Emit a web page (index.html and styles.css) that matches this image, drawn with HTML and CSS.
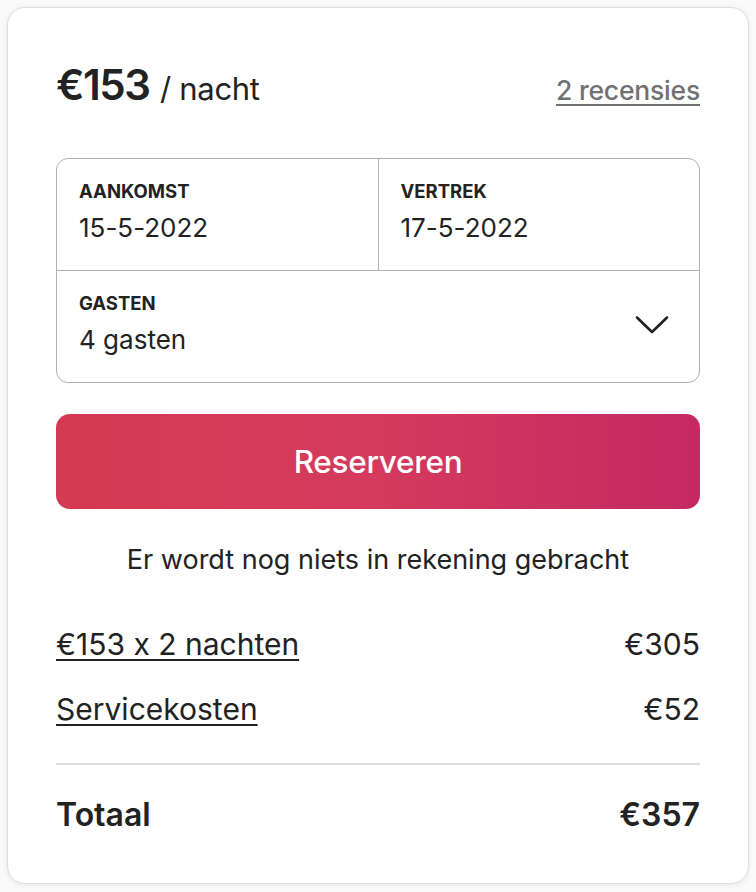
FILE: index.html
```html
<!DOCTYPE html>
<html lang="nl">
<head>
  <meta charset="UTF-8" />
  <meta name="viewport" content="width=device-width, initial-scale=1" />
  <title>Reserveren</title>
  <link rel="stylesheet" href="styles.css">
</head>
<body>

  <div class="booking-card">
    <div class="card-head">
      <div class="price"><strong>€153</strong> <span>/ nacht</span></div>
      <a class="reviews" href="#">2 recensies</a>
    </div>

    <div class="picker">
      <div class="picker-row">
        <div class="field field-left">
          <div class="field-label">AANKOMST</div>
          <div class="field-value">15-5-2022</div>
        </div>
        <div class="field">
          <div class="field-label">VERTREK</div>
          <div class="field-value">17-5-2022</div>
        </div>
      </div>
      <div class="field field-guests">
        <div>
          <div class="field-label">GASTEN</div>
          <div class="field-value">4 gasten</div>
        </div>
        <svg class="chevron" width="34" height="20" viewBox="0 0 34 20" aria-hidden="true">
          <path d="M2 2.5 L17 17 L32 2.5" fill="none" stroke="#222" stroke-width="2.6" stroke-linecap="round" stroke-linejoin="round"/>
        </svg>
      </div>
    </div>

    <button class="reserve-btn">Reserveren</button>

    <p class="notice">Er wordt nog niets in rekening gebracht</p>

    <div class="line">
      <a href="#">€153 x 2 nachten</a>
      <span>€305</span>
    </div>
    <div class="line">
      <a href="#">Servicekosten</a>
      <span>€52</span>
    </div>

    <div class="total">
      <span>Totaal</span>
      <span>€357</span>
    </div>
  </div>

</body>
</html>
```

FILE: styles.css
```css
body {
  margin: 0;
  padding: 7px;
  background: #fafafa;
  font-family: Inter, "Noto Sans", Arial, sans-serif;
  font-feature-settings: "calt" 0;
  color: #222;
}

.booking-card {
  box-sizing: border-box;
  width: 742px;
  height: 877px;
  background: #fff;
  border: 1px solid #dddddd;
  border-radius: 18px;
  box-shadow: 0 1px 6px rgba(0,0,0,0.08);
  padding: 52px 48px 0 48px;
}

.card-head {
  display: flex;
  justify-content: space-between;
  align-items: baseline;
}

.price {
  font-size: 42px;
  line-height: 50px;
  font-weight: 600;
}

.price strong {
  font-weight: 600;
  letter-spacing: -1.5px;
}

.price span {
  font-size: 31px;
  font-weight: 400;
  line-height: 1;
  letter-spacing: -0.3px;
}

.reviews {
  font-size: 26.5px;
  line-height: 1;
  color: #717171;
  font-weight: 500;
  letter-spacing: -0.2px;
  text-decoration: underline;
  text-decoration-thickness: 2px;
  text-underline-offset: 4px;
}

.picker {
  margin-top: 48px;
  border: 1.5px solid #b0b0b0;
  border-radius: 12px;
}

.picker-row {
  display: flex;
  border-bottom: 1.5px solid #b0b0b0;
}

.field {
  flex: 1;
  height: 111px;
  box-sizing: border-box;
  padding: 21px 22px 0 22px;
}

.field-left {
  border-right: 1.5px solid #b0b0b0;
}

.field-label {
  font-size: 18.5px;
  line-height: 22px;
  font-weight: 700;
}

.field-value {
  font-size: 26px;
  line-height: 32px;
  margin-top: 10px;
}

.field-guests {
  display: flex;
  justify-content: space-between;
  align-items: flex-start;
  padding-right: 30px;
}

.chevron {
  margin-top: 23px;
}

.reserve-btn {
  display: block;
  width: 100%;
  height: 95px;
  margin-top: 31px;
  border: none;
  border-radius: 14px;
  background: linear-gradient(to right, #d63a52 0%, #d43a5d 50%, #c42962 100%);
  color: #fff;
  font-family: inherit;
  font-size: 31.5px;
  font-weight: 500;
  letter-spacing: -0.3px;
  cursor: pointer;
}

.notice {
  text-align: center;
  font-size: 27px;
  line-height: 32px;
  margin: 35px 0 50px 0;
}

.line {
  display: flex;
  justify-content: space-between;
  font-size: 30px;
  line-height: 36px;
  margin-bottom: 29px;
}

.line a {
  color: #222;
  text-decoration: underline;
  text-decoration-thickness: 2px;
  text-underline-offset: 4px;
}

.total {
  display: flex;
  justify-content: space-between;
  border-top: 2px solid #dddddd;
  margin-top: 36px;
  padding-top: 31px;
  font-size: 32px;
  line-height: 38px;
  font-weight: 600;
}
```
